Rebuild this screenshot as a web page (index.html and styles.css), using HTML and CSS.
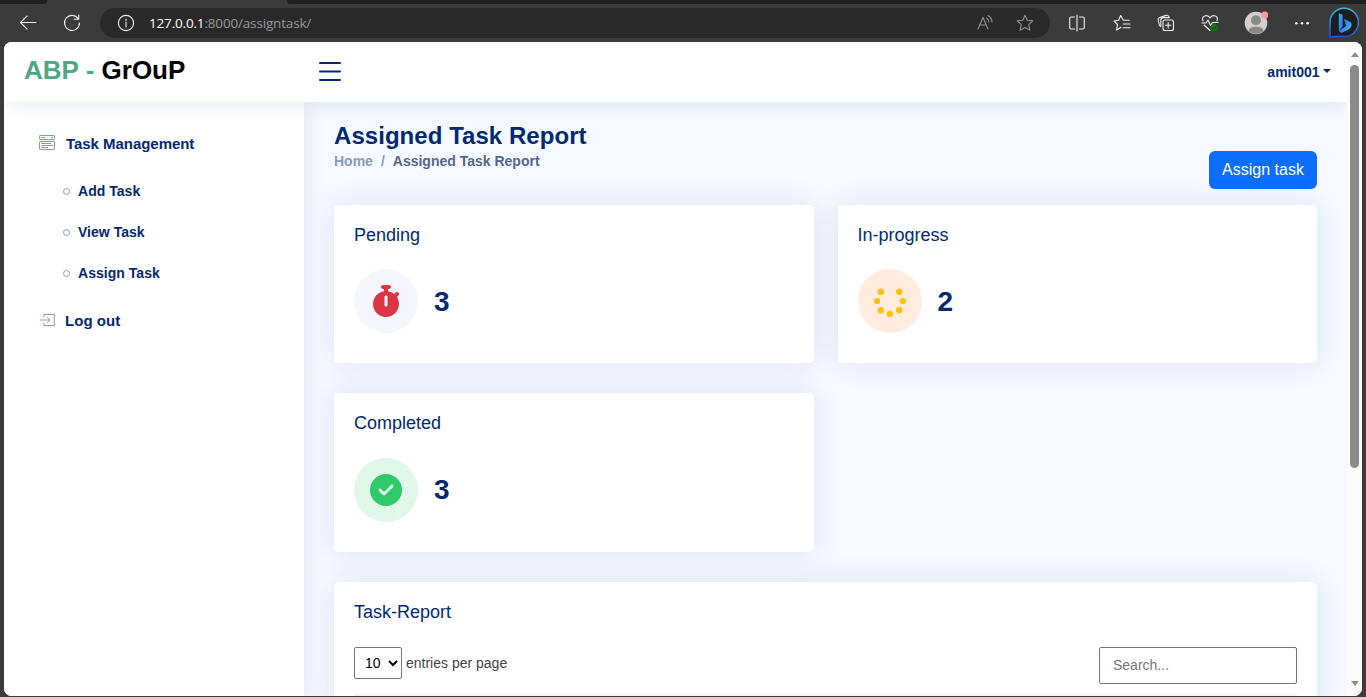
FILE: index.html
```html
<!DOCTYPE html>
<html lang="en">
<head>
<meta charset="utf-8">
<title>Assigned Task Report</title>
<link rel="stylesheet" href="styles.css">
</head>
<body>
<div class="tabstrip"><span class="tab-left"></span><span class="tab-active"></span><span class="tab-right"></span></div>
<div class="toolbar">
  <span class="nav-cell back"><svg width="18" height="18" viewBox="0 0 18 18"><path d="M17 8.5H2M8 2L1.5 8.5L8 15"/></svg></span>
  <span class="nav-cell reload"><svg width="18" height="18" viewBox="0 0 18 18"><path d="M15.4 5A7.5 7.5 0 1 0 16.5 9M15.7 1V5.3H11.2"/></svg></span>
  <div class="address">
    <svg width="18" height="18" viewBox="0 0 18 18"><circle cx="9" cy="9" r="7.6"/><path d="M9 8V13M9 5V6.4"/></svg>
    <span class="url"><b>127.0.0.1</b>:8000/assigntask/</span>
    <svg class="dim read" width="18" height="18" viewBox="0 0 18 18"><path d="M2 15L7 3.5L12 15M3.8 11H10.3M10.5 4Q12.8 5.5 12.8 8M12 1.5Q16 4 16 8"/></svg>
    <svg class="dim" width="18" height="18" viewBox="0 0 18 18"><path d="M9 1.3L11.3 6.3L16.8 6.9L12.7 10.6L13.9 16.2L9 13.4L4.1 16.2L5.3 10.6L1.2 6.9L6.7 6.3Z"/></svg>
  </div>
  <div class="tools">
    <span><svg width="18" height="18" viewBox="0 0 18 18"><path d="M6.5 3H3.2Q1.7 3 1.7 4.5V13.5Q1.7 15 3.2 15H6.5M11.5 3H14.8Q16.3 3 16.3 4.5V13.5Q16.3 15 14.8 15H11.5M9 1V17"/></svg></span>
    <span><svg width="18" height="18" viewBox="0 0 18 18"><path d="M16.3 6.2H10.4L7.7 1.5L5.6 6.2L1 7L4.5 10.5L3.6 16L8 13.3M10.3 10H17M10.3 13.8H17"/></svg></span>
    <span><svg width="18" height="18" viewBox="0 0 18 18"><rect x="6" y="6" width="10.5" height="10.5" rx="2"/><path d="M11.2 8.5V14M8.500 11.2H14M3.800 12.500Q2.500 12 2.200 10.500L1.200 6Q.8 4 2.700 3.400L9.200 1.400Q11 .9 11.800 2.600L12.300 3.600H6Q3.800 4 3.800 6.400V12.500"/></svg></span>
    <span><svg width="18" height="18" viewBox="0 0 18 18"><path d="M2 7Q.4 2.5 4.5 1.7Q7.5 1.2 9 4Q10.5 1.2 13.5 1.7Q17.6 2.5 16 7M1 9H5L7 6L9.5 11.5L11.5 8.5H17M3 11L9 16.5"/><circle class="shield" cx="13.2" cy="13.6" r="3.6"/><path class="tick" d="M11.6 13.6L12.8 14.8L15 12.5"/></svg></span>
    <span class="avatar-cell"><svg width="24" height="24" viewBox="0 0 24 24"><g class="avatar"><circle cx="12" cy="12" r="11.3" fill="#d2d0ce"/><circle cx="12" cy="9.3" r="5" fill="#8a8886"/><path d="M4.5 20.2Q5 15.8 12 15.8Q19 15.8 19.5 20.2Q12 26 4.5 20.2Z" fill="#8a8886"/><circle cx="20.8" cy="4" r="3.6" fill="#ff9d96"/></g></svg></span>
    <span class="more"><svg width="18" height="18" viewBox="0 0 18 18"><g class="avatar" fill="#fff"><circle cx="3.4" cy="9.2" r="1.3"/><circle cx="9" cy="9.2" r="1.3"/><circle cx="14.6" cy="9.2" r="1.3"/></g></svg></span>
    <span class="bing"><svg width="32" height="32" viewBox="0 0 32 32">
      <defs><linearGradient id="ring" x1="0" y1="0" x2="0" y2="1"><stop offset="0" stop-color="#35b8d8"/><stop offset="1" stop-color="#1c55dc"/></linearGradient><linearGradient id="bee" x1="0" y1="0" x2="1" y2="1"><stop offset="0" stop-color="#38a8fa"/><stop offset=".5" stop-color="#2c7bf2"/><stop offset="1" stop-color="#43dbe8"/></linearGradient></defs>
      <path d="M2 30Q2.500 27 2 24V16A14.2 14.2 0 1 1 16 29.6Q9 29 2 30Z" fill="#1d1d1d" stroke="url(#ring)" stroke-width="1.5"/>
      <path class="avatar" d="M10.8 6.3L14.6 7.8V19.5L10.8 24.2ZM16 12L22.4 15Q24 16.2 23.4 19Q22.6 21 20.3 22.5L14.5 25.6Q12 26 11 23.8L18 19.2Z" fill="url(#bee)"/></svg></span>
  </div>
</div>
<div class="viewport">
  <div class="page">
    <header class="header">
      <a class="logo"><span>ABP -</span> GrOuP</a>
      <svg class="burger" width="22" height="20" viewBox="0 0 22 20"><path d="M1 2H21M1 10.500H21M1 19H21"/></svg>
      <span class="user">amit001<i class="caret"></i></span>
    </header>
    <div class="body">
      <aside class="sidebar">
        <a class="nav-link"><svg width="16" height="16" viewBox="0 0 16 16"><rect x=".5" y=".5" width="15" height="4" rx=".6"/><rect x=".5" y="6.5" width="15" height="8" rx=".6"/><path d="M2 2.500H6M12 2.500H14M2 8.500H12M2 10.500H14M2 12.500H9"/></svg><span>Task Management</span></a>
        <ul class="nav-sub">
          <li><i></i><span>Add Task</span></li>
          <li><i></i><span>View Task</span></li>
          <li><i></i><span>Assign Task</span></li>
        </ul>
        <a class="nav-link logout"><svg width="16" height="16" viewBox="0 0 16 16"><path d="M5 5.500V2.500H15.300V13.500H5V10.500M1 8H11M8 5L11 8L8 11"/></svg><span>Log out</span></a>
      </aside>
      <main class="main">
        <div class="page-head">
          <div>
            <h1>Assigned Task Report</h1>
            <div class="crumbs"><span>Home</span><span class="slash">/</span><b>Assigned Task Report</b></div>
          </div>
          <button class="assign">Assign task</button>
        </div>
        <div class="cards">
          <section class="card">
            <h5>Pending</h5>
            <div class="stat"><div class="disc pending"><svg width="28" height="32" viewBox="0 0 448 512"><path fill="#dc3545" d="M176 0c-17.7 0-32 14.3-32 32s14.300 32 32 32h16V98.400C92.300 113.800 16 200 16 304c0 114.900 93.100 208 208 208s208-93.100 208-208c0-41.800-12.300-80.700-33.500-113.200l24.100-24.100c12.500-12.500 12.500-32.800 0-45.300s-32.800-12.500-45.300 0L355.700 143c-28.100-23-62.200-38.800-99.700-44.600V64h16c17.700 0 32-14.300 32-32s-14.300-32-32-32H176zm72 192V320c0 13.300-10.700 24-24 24s-24-10.700-24-24V192c0-13.300 10.700-24 24-24s24 10.700 24 24z"/></svg></div><h6>3</h6></div>
          </section>
          <section class="card">
            <h5>In-progress</h5>
            <div class="stat"><div class="disc progress"><svg width="32" height="32" viewBox="0 0 32 32" fill="#ffc107"><circle cx="6.800" cy="6.800" r="3.200"/><circle cx="25.200" cy="6.800" r="3.200"/><circle cx="3.100" cy="16" r="3.100"/><circle cx="28.900" cy="16" r="3.100"/><circle cx="6.800" cy="25.200" r="3.200"/><circle cx="25.200" cy="25.200" r="3.200"/><circle cx="16" cy="28.900" r="3.100"/></svg></div><h6>2</h6></div>
          </section>
          <section class="card">
            <h5>Completed</h5>
            <div class="stat"><div class="disc done"><svg width="32" height="32" viewBox="0 0 512 512"><path fill="#2eca6a" d="M256 512A256 256 0 1 0 256 0a256 256 0 1 0 0 512zM369 209L241 337c-9.400 9.400-24.600 9.400-33.900 0l-64-64c-9.400-9.400-9.400-24.600 0-33.900s24.600-9.400 33.900 0l47 47L335 175c9.400-9.400 24.600-9.400 33.900 0s9.400 24.600 0 33.900z"/></svg></div><h6>3</h6></div>
          </section>
        </div>
        <section class="card report">
          <h5>Task-Report</h5>
          <div class="table-top">
            <label><select><option>10</option></select> entries per page</label>
            <input type="text" placeholder="Search...">
          </div>
          <div class="table-line"></div>
        </section>
      </main>
    </div>
  </div>
  <div class="scrollbar"><i class="up"></i><span class="thumb"></span><i class="down"></i></div>
</div>
</body>
</html>
```
FILE: styles.css
```css
* { box-sizing: border-box; }
body { margin: 0; height: 697px; overflow: hidden; background: #3b3b3b; font-family: "Liberation Sans", Arial, sans-serif; color: #444; display: flex; flex-direction: column; }
h1, h5, h6, ul { margin: 0; padding: 0; }

.tabstrip { height: 4px; flex: none; display: flex; background: #3b3b3b; }
.tab-left { width: 47px; background: #202020; border-bottom-right-radius: 3px; }
.tab-active { width: 240px; }
.tab-right { flex: 1; background: #202020; border-bottom-left-radius: 3px; }
.toolbar { height: 38px; flex: none; display: flex; align-items: center; }
.toolbar svg { display: block; fill: none; stroke: #f0f0f0; stroke-width: 1.1; stroke-linejoin: round; stroke-linecap: round; }
.toolbar .avatar { stroke: none; }
.nav-cell { width: 44px; display: flex; justify-content: center; }
.back { margin-left: 6px; }
.address { width: 950px; height: 30px; margin-left: 6px; border-radius: 15px; background: #292929; display: flex; align-items: center; padding: 0 16px 0 17px; }
.url { font: 13.5px "Open Sans", "Noto Sans", sans-serif; color: #999; margin-left: 14px; flex: 1; letter-spacing: -.17px; }
.url b { font-weight: 400; color: #fff; }
.toolbar .dim { stroke: #929292; }
.read { margin-right: 22px; }
.tools { margin-left: 5px; display: grid; grid-template-columns: 44px 45px 44px 44px 47px 45px 39px; }
.tools span { display: flex; align-items: center; justify-content: center; height: 38px; }
.tools .shield { fill: #107c10; stroke: none; }
.tools .tick { stroke: #0a4d0a; }

.viewport { height: 654px; margin: 0 4px; border-radius: 8px; overflow: hidden; display: flex; background: #fff; }
.page { flex: 1; display: flex; flex-direction: column; overflow: hidden; background: #f6f9ff; }
.header { height: 60px; flex: none; position: relative; z-index: 3; background: #fff; box-shadow: 0 2px 20px rgba(1, 41, 112, .1); display: flex; align-items: center; padding-left: 20px; }
.logo { width: 295px; font-weight: 700; font-size: 26px; color: #000; white-space: nowrap; padding-bottom: 4px; letter-spacing: 0; }
.logo span { color: #4fa885; }
.burger { display: block; margin-top: -3px; }
.burger path { stroke: #012970; stroke-width: 2; stroke-linecap: round; }
.user { margin-left: auto; margin-right: 16px; font-size: 14px; font-weight: 700; color: #012970; display: flex; align-items: center; }
.caret { border: 4px solid transparent; border-top-color: #012970; border-bottom: 0; margin-left: 3.5px; margin-top: -2px; }

.body { flex: 1; display: flex; min-height: 0; }
.sidebar { width: 300px; flex: none; background: #fff; box-shadow: 0 0 20px rgba(1, 41, 112, .1); padding: 20px; z-index: 2; color: #012970; font-weight: 700; }
.nav-link { height: 43px; padding: 0 15px; display: flex; align-items: center; font-size: 15px; letter-spacing: -.04px; }
.nav-link svg { fill: none; stroke: #899bbd; stroke-width: 1; margin-right: 11px; margin-top: -1px; }
.logout { letter-spacing: .04px; }
.logout svg { margin-right: 10px; }
.nav-sub { list-style: none; padding: 5px 0 6px 40px; }
.nav-sub li { height: 41px; display: flex; align-items: center; font-size: 14px; letter-spacing: .03px; }
.nav-sub i { width: 7px; height: 7px; border: 1px solid #899bbd; border-radius: 50%; margin: 2px 8px 0 -1px; }

.main { flex: 1; min-width: 0; padding: 19px 30px 0; }
.page-head { height: 84px; display: flex; justify-content: space-between; }
h1 { font-size: 24px; line-height: 29px; color: #012970; letter-spacing: .05px; }
.crumbs { margin-top: 3px; font-size: 14px; line-height: 17px; font-weight: 700; color: #899bbd; display: flex; letter-spacing: 0; }
.slash { margin: 0 8px; }
.crumbs b { color: #51678f; }
.assign { width: 108px; height: 38px; margin-top: 30px; padding: 0; border: 0; border-radius: 6px; background: #0d6efd; color: #fff; font: 16px "Liberation Sans", Arial, sans-serif; }
.cards { display: grid; grid-template-columns: 1fr 1fr; column-gap: 24px; row-gap: 30px; grid-auto-rows: 158.4px; margin-bottom: 30px; }
.card { background: #fff; border-radius: 5px; box-shadow: 0 0 30px rgba(1, 41, 112, .1); padding: 0 20px; }
.card h5 { padding: 20px 0 15px; margin-bottom: 7.600px; font-size: 18px; line-height: 21.600px; font-weight: 400; color: #012970; }
.stat { display: flex; align-items: center; }
.disc { width: 64px; height: 64px; border-radius: 50%; display: flex; align-items: center; justify-content: center; }
.pending { background: #f6f6fe; }
.progress { background: #ffecdf; }
.done { background: #e0f8e9; }
.stat h6 { font-size: 28px; line-height: 34px; color: #012970; margin: 1px 0 0 16px; }
.report { height: 300px; }
.report h5 { margin-bottom: 8.600px; }
.table-top { display: flex; justify-content: space-between; font-size: 14px; }
.table-top label { height: 32px; display: flex; gap: 4px; align-items: center; }
.table-top select { width: 48px; height: 32px; padding: 0 0 0 6px; font: 14px "Liberation Sans", Arial, sans-serif; background: #fff; color: #000; border: 1px solid #767676; border-radius: 2px; }
.table-top input { width: 198px; height: 37px; padding: 6px 12px 6px 13px; font: 14px "Liberation Sans", Arial, sans-serif; border: 1px solid #767676; border-radius: 2px; }
.table-line { height: 2px; margin-top: 10px; background: #f3f4f9; }

.scrollbar { width: 15px; background: #fbfbfb; display: flex; flex-direction: column; align-items: center; padding: 10px 0 10px; }
.up { border: 4.500px solid transparent; border-bottom: 5px solid #8b8b8b; border-top: 0; }
.down { border: 4.500px solid transparent; border-top: 5px solid #8b8b8b; border-bottom: 0; margin-top: auto; }
.thumb { width: 9px; height: 403px; margin-top: 8px; background: #8b8b8b; border-radius: 5px; }
```
